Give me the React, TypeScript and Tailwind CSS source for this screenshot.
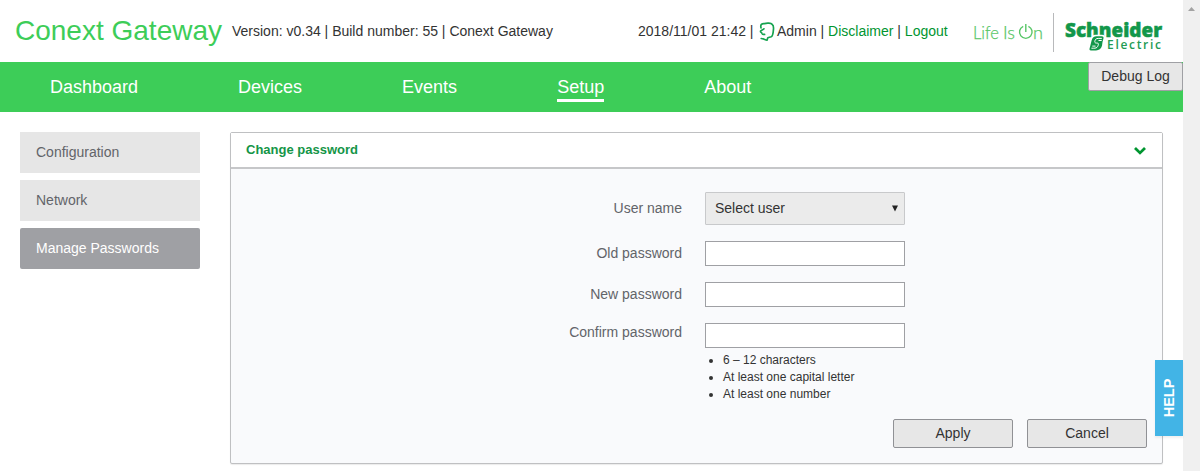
import React from "react";

const navItems = ["Dashboard", "Devices", "Events", "Setup", "About"];
const sideItems = ["Configuration", "Network", "Manage Passwords"];
const rules = ["6 – 12 characters", "At least one capital letter", "At least one number"];

function UserIcon() {
  return (
    <svg width="16" height="20" viewBox="0 0 16 20" fill="none" stroke="#16a34f" strokeWidth="1.7" strokeLinejoin="round" strokeLinecap="round">
      <path d="M2 5.8 C1.2 2.4 2.8 1.4 5.4 1.6 C8 .8 12 1 13.2 2.4 C15 3.4 14.6 6 14.4 8 C14.2 11 14 14 12.2 14.8 L8.8 15.8 L8 18.2 C6.2 17.8 4.4 16.8 2.2 16.5" />
      <path d="M5 6.8 C4 8 1.6 8 1.4 9.2 C1.2 10.2 2.8 10.4 3 11.4 C3.4 12.6 4.6 12.4 5.6 12.4" />
    </svg>
  );
}

function LifeIsOn() {
  return (
    <svg width="72" height="24" viewBox="0 0 72 24" role="img" aria-label="Life Is On">
      <g fill="#57c667" stroke="#57c667" strokeWidth=".25" fontFamily="Lato, sans-serif" fontWeight="300" fontSize="18">
        <text x="0" y="18.5" textLength="26" lengthAdjust="spacingAndGlyphs">Life</text>
        <text x="30" y="18.5" textLength="12" lengthAdjust="spacingAndGlyphs">Is</text>
        <text x="60" y="18.5" textLength="10" lengthAdjust="spacingAndGlyphs">n</text>
      </g>
      <path d="M50.2 6.3 A6.3 6.3 0 1 0 55.4 6.3 M52.8 4 V12" fill="none" stroke="#57c667" strokeWidth="1.4" />
    </svg>
  );
}

function SchneiderLogo() {
  return (
    <svg width="100" height="34" viewBox="0 0 100 34" className="overflow-visible" role="img" aria-label="Schneider Electric">
      <text x="0" y="16.4" textLength="97" lengthAdjust="spacingAndGlyphs" fill="#12974a" stroke="#12974a" strokeWidth=".5" fontFamily="'Open Sans', 'Noto Sans', sans-serif" fontWeight="800" fontSize="19">Schneider</text>
      <path d="M30.5 13.8 H37 C39.6 13.8 40.3 15.2 39.8 17.4 L38 25 C37 29 34.5 30.8 31 30.8 H25.5 C23 30.8 23 29 23.5 27 L25.4 19 C26.2 15.6 28 13.8 30.5 13.8 Z" fill="#fff" />
      <path d="M31.5 15.2 H36.6 C38.6 15.2 38.8 16.2 38.4 17.8 L37.5 21 L37 24.8 C36.2 28 34 29.4 31 29.4 H26 C24.3 29.4 24.3 28.4 24.7 27 L25.5 24 L26.6 19.4 C27.4 16.5 29 15.2 31.5 15.2 Z" fill="#12974a" />
      <path d="M36.8 17.4 H33.2 C30.8 17.4 30.1 18.8 29.8 20.6 C29.6 22.1 31.1 22.1 32.4 22.1 C34 22.1 33.3 24.2 32.7 25.4 C32 27 30.4 27.2 28.8 27.2 H26.4 M36.7 19.5 H33.5 M27.3 25.1 H30.5" fill="none" stroke="#fff" strokeWidth="1" />
      <text x="42" y="28" textLength="54" fill="#229b54" fontFamily="'Open Sans', 'Noto Sans', sans-serif" fontWeight="600" fontSize="12">Electric</text>
    </svg>
  );
}

function PasswordRow({ label, lift = false }: { label: string; lift?: boolean }) {
  return (
    <label className="flex h-[25px] items-center">
      <span className={lift ? "w-[451px] pb-[7px] text-right text-[#626469]" : "w-[451px] pb-[2px] text-right text-[#626469]"}>{label}</span>
      <input type="password" className="ml-[23px] h-[25px] w-[200px] border border-[#9fa0a4] bg-white px-2 outline-none" />
    </label>
  );
}

export default function App() {
  return (
    <div className="flex h-[471px] w-[1200px] overflow-hidden bg-white font-['Liberation_Sans',Arial,sans-serif] text-[14px] leading-4 text-[#333]">
      <div className="relative w-[1183px]">
        <header className="flex h-[62px] items-center pl-[15px]">
          <h1 className="w-[217px] text-[28px] leading-8 text-[#3dcd58]">Conext Gateway</h1>
          <p className="w-[406px] whitespace-nowrap">Version: v0.34 | Build number: 55 | Conext Gateway</p>
          <div className="flex items-center whitespace-nowrap">
            <span>2018/11/01 21:42 |</span>
            <span className="ml-[6px] mt-[2px] w-[17.5px]"><UserIcon /></span>
            <span>Admin | <a className="text-[#009530]">Disclaimer</a> | <a className="text-[#009530]">Logout</a></span>
          </div>
          <div className="ml-[25px] mt-[2px] flex items-center">
            <LifeIsOn />
            <div className="ml-[8px] h-[39px] w-px bg-[#b8b9bb]" />
            <div className="ml-[11px] mt-[12px]"><SchneiderLogo /></div>
          </div>
        </header>

        <nav className="flex h-[50px] items-start justify-between bg-[#3dcd58]">
          <div className="flex gap-[100px] pl-[50px] pt-[15px] text-[18px] leading-5 text-white">
            {navItems.map((item) => (
              <a key={item} className={item === "Setup" ? "h-[25px] border-b-[3px] border-white" : ""}>{item}</a>
            ))}
          </div>
          <button className="h-[29px] w-[95px] rounded-[2px] border border-[#9fa0a4] bg-[#e7e7e7] pb-[2px]">Debug Log</button>
        </nav>

        <div className="flex gap-[30px] pl-5 pt-5">
          <aside className="flex w-[180px] flex-col gap-[7px]">
            {sideItems.map((item) => (
              <a key={item} className={item === "Manage Passwords" ? "flex h-[41px] items-center rounded-[2px] bg-[#9fa0a4] pb-[2px] pl-4 text-white" : "flex h-[41px] items-center bg-[#e6e6e6] pb-[2px] pl-4 text-[#626469]"}>{item}</a>
            ))}
          </aside>

          <section className="h-[332px] w-[933px] rounded-[2px] border border-[#bfc0c2] bg-[#f9fafc] shadow-[0_1px_1px_rgba(0,0,0,0.08)]">
            <div className="flex h-[36px] items-center justify-between border-b-2 border-[#c6c7c9] bg-white pl-[15px] pr-[16px]">
              <h2 className="text-[13px] font-bold text-[#149547]">Change password</h2>
              <svg width="12" height="8" viewBox="0 0 12 8" className="mt-[2px]" fill="none" stroke="#009530" strokeWidth="2.8"><path d="M1 1 L6 5.9 L11 1" /></svg>
            </div>
            <div className="flex flex-col gap-4 pt-[23px]">
              <div className="flex items-center">
                <span className="w-[451px] pb-[2px] text-right text-[#626469]">User name</span>
                <button className="ml-[23px] flex h-[33px] w-[200px] items-center justify-between rounded-[1px] border border-[#c8c9cb] bg-[#ebebeb] pl-[9px] pr-[6px] text-left">
                  <span className="pb-[2px]">Select user</span>
                  <svg width="6" height="7" viewBox="0 0 6 7"><path d="M0 0.5 H6 L3 6.5 Z" fill="#222" /></svg>
                </button>
              </div>
              <PasswordRow label="Old password" />
              <PasswordRow label="New password" />
              <PasswordRow label="Confirm password" lift />
            </div>
            <ul className="ml-[492px] mt-[4px] list-disc text-[12px] leading-[17px]">
              {rules.map((rule) => <li key={rule}>{rule}</li>)}
            </ul>
            <div className="mr-[15px] mt-[16px] flex justify-end gap-[14px]">
              <button className="h-[29px] w-[120px] rounded-[2px] border border-[#909195] bg-[#e7e7e7] pb-[2px]">Apply</button>
              <button className="h-[29px] w-[120px] rounded-[2px] border border-[#909195] bg-[#e7e7e7] pb-[2px]">Cancel</button>
            </div>
          </section>
        </div>

        <button className="absolute right-0 top-[360px] flex h-[76px] w-[28px] items-center justify-center bg-[#42b4e6] shadow-[0_2px_2px_rgba(0,0,0,0.06)]">
          <span className="-rotate-90 text-[14.5px] font-bold text-white">HELP</span>
        </button>
      </div>
      <div className="flex w-[17px] justify-center bg-[#f0f0f0] pt-[7px]">
        <svg width="7" height="4" viewBox="0 0 7 4"><path d="M0 4 L3.5 0 L7 4 Z" fill="#a3a3a3" /></svg>
      </div>
    </div>
  );
}
